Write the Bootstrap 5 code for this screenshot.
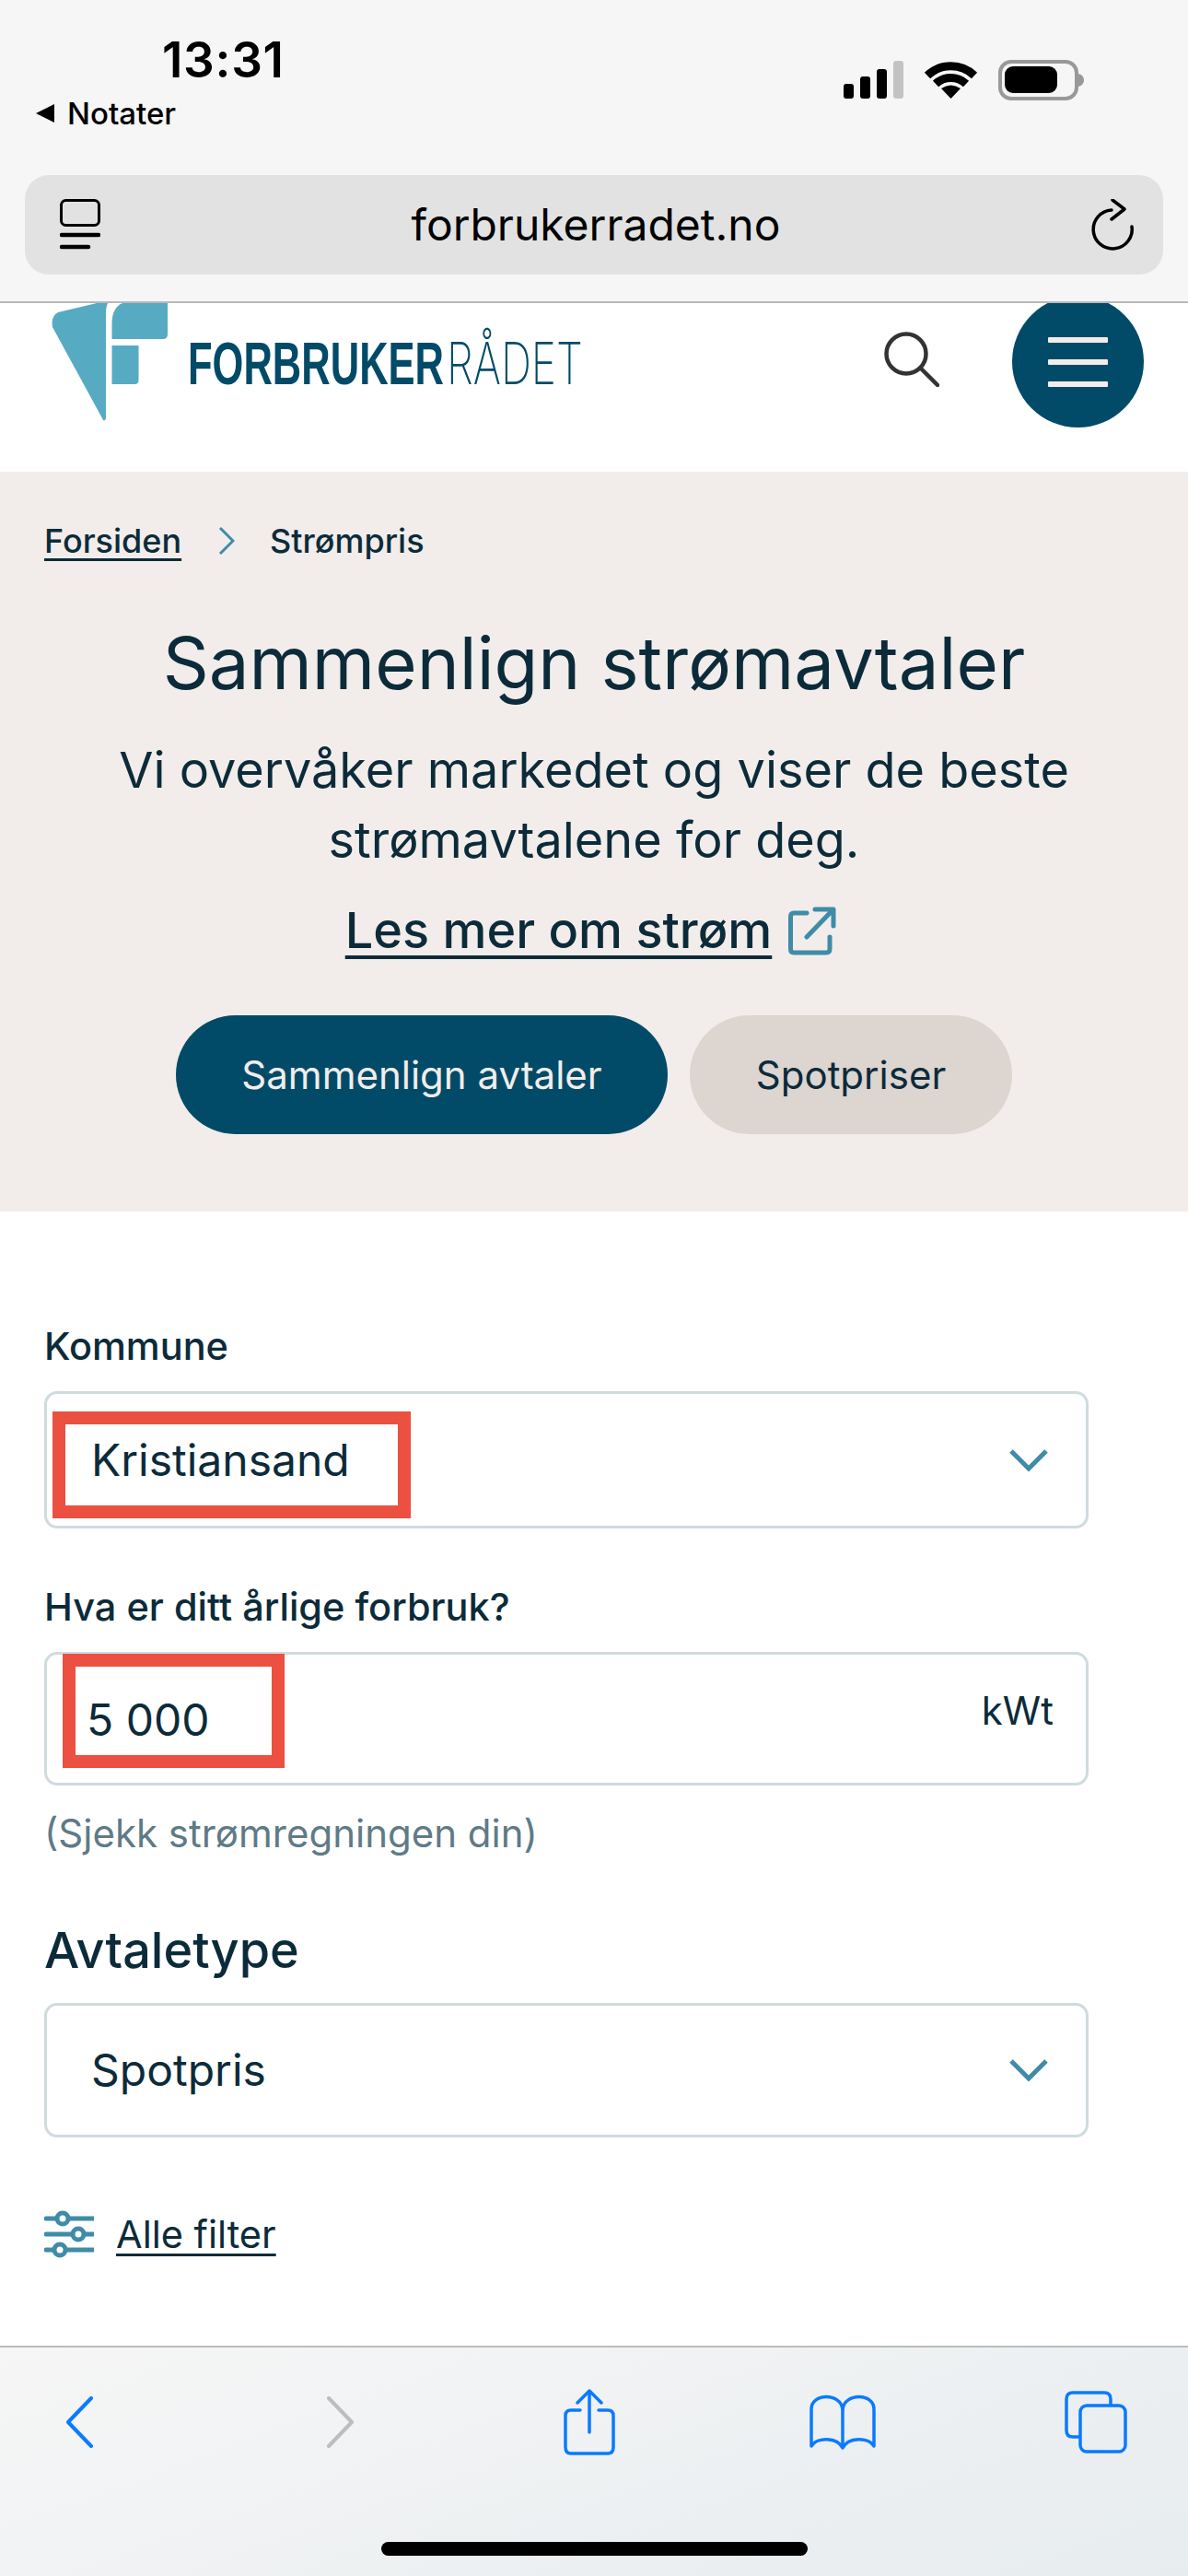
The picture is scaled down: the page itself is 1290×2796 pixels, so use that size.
<!DOCTYPE html>
<html lang="no">
<head>
  <meta charset="UTF-8">
  <meta name="viewport" content="width=device-width, initial-scale=1.0">
  <title>Sammenlign strømavtaler</title>
  <link href="https://cdn.jsdelivr.net/npm/bootstrap@5.3.0/dist/css/bootstrap.min.css" rel="stylesheet">
  <style>
    body { font-family: Inter, "Liberation Sans", sans-serif; color: #0c2b3a; background: #fff; }
    a { color: inherit; }
    .page-wrap { min-height: 2796px; }

    /* browser chrome */
    .chrome-top { height: 329px; padding: 38px 27px 0; background: #f6f6f6; border-bottom: 2px solid #b8b8b8; color: #000; }
    .status-row { height: 54px; }
    .clock { margin-left: 149px; font-size: 53px; line-height: 54px; font-weight: 600; letter-spacing: .7px; }
    .status-icons { margin: 27px 83px 0 0; }
    .back-app { margin-top: 13px; margin-left: 11px; font-size: 33px; line-height: 36px; font-weight: 500; gap: 13px; }
    .url-bar { height: 108px; margin-top: 49px; padding: 0 32px 0 38px; background: #e2e2e2; border-radius: 26px; font-size: 48px; }

    /* site header */
    .site-head { height: 183px; padding: 0 48px 0 56px; overflow: hidden; }
    .brand-name { margin: 42px 0 0 22px; height: 46px; font-size: 64px; line-height: 46px; color: #024b68; white-space: nowrap; }
    .brand-strong, .brand-thin { display: inline-block; transform-origin: left center; }
    .brand-strong { width: 417px; margin-right: -142px; font-family: "Liberation Sans", sans-serif; font-weight: 700; transform: scaleX(.68); }
    .brand-thin { width: 186px; margin-left: 6px; font-family: Inter, sans-serif; font-weight: 200; font-size: 63px; transform: scaleX(.73); }
    .search-btn { margin: 31px 79px 0 0; }
    .menu-btn { width: 143px; height: 143px; margin-top: -8px; background: #024b68; border-radius: 50%; gap: 18px; }
    .menu-btn span { display: block; width: 65px; height: 6px; background: #f2edea; border-radius: 1px; }

    /* hero */
    .hero-box { background: #f2edea; padding: 53px 48px 84px; height: 803px; }
    .crumbs { font-size: 36px; line-height: 44px; font-weight: 500; }
    .crumbs a { width: 148px; text-decoration-thickness: 3px; text-underline-offset: 6px; }
    .crumbs svg { margin: 0 38px 0 41px; }
    .hero-title { margin: 61px 0 0; font-size: 78px; line-height: 100px; font-weight: 400; }
    .hero-text { margin: 28px 0 0; font-size: 54px; line-height: 76px; }
    .hero-link { margin: 28px 7px 0 0; font-size: 54px; line-height: 64px; font-weight: 500; gap: 18px; }
    .hero-link a { text-decoration-thickness: 4px; text-underline-offset: 8px; }
    .hero-btns { margin-top: 60px; gap: 24px; }
    .btn-pill { height: 129px; border: 0; border-radius: 65px; font-size: 42px; line-height: 1; }
    .btn-main { width: 534px; background: #024b68; color: #f2edea; }
    .btn-soft { width: 350px; background: #dcd5d0; color: #0c2b3a; }

    /* form */
    .filter-form { padding: 123px 108px 0 48px; }
    .field-label { display: block; margin: 0 0 26px; font-size: 41.500px; line-height: 46px; font-weight: 500; }
    .field-next { margin-top: 62px; }
    .box-field { position: relative; }
    .form-select.pick-box, .input-box { height: 149px; border: 3px solid #d0dbdf; border-radius: 14px; background-color: #fff; color: #0c2b3a; font-size: 48px; }
    .form-select.pick-box { padding: 0 0 0 48px; background-position: right 40px center; background-size: 44px 26px; box-shadow: none;
      background-image: url("data:image/svg+xml,%3Csvg xmlns='http://www.w3.org/2000/svg' viewBox='0 0 44 26'%3E%3Cpath d='M3 3l19 19L41 3' fill='none' stroke='%233f8ba8' stroke-width='5'/%3E%3C/svg%3E"); }
    .input-box { height: 145px; padding: 0 35px 0 43px; }
    .input-box input { flex: 1; width: 100%; margin-top: 2px; padding: 0; border: 0; outline: 0; background: none; color: inherit; font: inherit; }
    .unit-text { margin-top: -18px; font-size: 42px; }
    .note-mark { position: absolute; border-style: solid; border-color: #eb5040; border-width: 14px; pointer-events: none; }
    .mark-city { left: 9px; top: 22px; width: 389px; height: 116px; }
    .mark-use { left: 20px; top: 2px; width: 241px; height: 124px; }
    .hint-text { margin: 29px 0 0; font-size: 42px; line-height: 46px; color: #5f7a87; }
    .type-title { margin: 72px 0 25px; font-size: 54px; line-height: 64px; font-weight: 500; }
    .pick-short { height: 146px !important; }
    .filter-link { margin-top: 79px; font-size: 41.500px; line-height: 50px; gap: 24px; }
    .filter-link a { text-decoration-thickness: 3px; text-underline-offset: 6px; }

    /* bottom toolbar */
    .chrome-bottom { height: 250px; padding-top: 45px; background: linear-gradient(160deg, #f6f6f6, #e7ecef); border-top: 2px solid #bcbcbc; }
    .tool-row { height: 71px; padding-left: 72px; }
    .tool-forward { margin-left: 252px; }
    .tool-share { margin-left: 228px; }
    .tool-book { margin-left: 211px; }
    .tool-tabs { margin-left: 205px; }
    .home-bar { width: 463px; height: 15px; margin: 95px auto 0; background: #000; border-radius: 8px; }
  </style>
</head>
<body>
  <div class="page-wrap d-flex flex-column">
    <header class="chrome-top">
      <div class="status-row d-flex justify-content-between align-items-start">
        <div class="clock">13:31</div>
        <svg class="status-icons" width="264" height="44" viewBox="0 0 264 44">
          <rect x="0" y="26" width="11" height="16" rx="3"/>
          <rect x="18" y="18" width="11" height="24" rx="3"/>
          <rect x="36" y="10" width="11" height="32" rx="3"/>
          <rect x="54" y="1" width="11" height="41" rx="3" fill="#c3c3c3"/>
          <path d="M91 17A37 37 0 0 1 142 17" fill="none" stroke="#000" stroke-width="9"/>
          <path d="M100 26A24 24 0 0 1 133 26" fill="none" stroke="#000" stroke-width="9"/>
          <path d="M116.500 42L106 31Q116.500 24 127 31Z"/>
          <rect x="170" y="2" width="83" height="40" rx="12" fill="none" stroke="#999" stroke-width="4"/>
          <rect x="175" y="7" width="57" height="29" rx="9"/>
          <path d="M255 15c4 1 6 4 6 7s-2 6-6 7z" fill="#999"/>
        </svg>
      </div>
      <div class="back-app d-flex align-items-center">
        <svg width="22" height="20" viewBox="0 0 22 20"><path d="M21 0v20L1 10z"/></svg>
        <span>Notater</span>
      </div>
      <div class="url-bar d-flex align-items-center justify-content-between">
        <svg width="44" height="56" viewBox="0 0 44 56" fill="none" stroke="#000">
          <rect x="1.500" y="1.500" width="41" height="27" rx="5" stroke-width="3"/>
          <path d="M2 39h40M2 52h29" stroke-width="4.500" stroke-linecap="round"/>
        </svg>
        <span>forbrukerradet.no</span>
        <svg width="46" height="56" viewBox="0 0 46 56" fill="none" stroke="#000" stroke-width="3.500" stroke-linecap="round" stroke-linejoin="round">
          <path d="M22 12A21 21 0 1 0 44 30"/>
          <path d="M23 1l13 10-14 11"/>
        </svg>
      </div>
    </header>

    <div class="site-head d-flex align-items-start">
      <svg width="126" height="128" viewBox="0 0 126 128" fill="#56abc2" class="flex-shrink-0">
        <path d="M49 0H61C59 4 59 9 59 16V125Q57 130 55 125L1 26Q-1 14 7 10Z"/>
        <path d="M65.500 22C65.500 10 70 3 77 0H126V34Q126 39 121 39H65.500Z"/>
        <path d="M65.500 46H94.500V84Q94.500 88 90 88H65.500Z"/>
      </svg>
      <div class="brand-name flex-grow-1"><span class="brand-strong">FORBRUKER</span><span class="brand-thin">RÅDET</span></div>
      <svg class="search-btn flex-shrink-0" width="60" height="60" viewBox="0 0 60 60" fill="none" stroke="#333" stroke-width="4.500" stroke-linecap="round">
        <circle cx="24" cy="24" r="21.500"/>
        <path d="M40 40l18 18"/>
      </svg>
      <button class="menu-btn d-flex flex-column align-items-center justify-content-center border-0 p-0 flex-shrink-0" type="button" aria-label="Meny">
        <span></span><span></span><span></span>
      </button>
    </div>

    <section class="hero-box">
      <nav class="crumbs d-flex align-items-center" aria-label="breadcrumb">
        <a href="#">Forsiden</a>
        <svg width="18" height="32" viewBox="0 0 18 32" fill="none" stroke="#3f8ba8" stroke-width="3"><path d="M2 2l14 14L2 30"/></svg>
        <span>Strømpris</span>
      </nav>
      <h1 class="hero-title text-center">Sammenlign strømavtaler</h1>
      <p class="hero-text text-center">Vi overvåker markedet og viser de beste<br>strømavtalene for deg.</p>
      <div class="hero-link d-flex justify-content-center align-items-center">
        <a href="#">Les mer om strøm</a>
        <svg width="52" height="53" viewBox="0 0 52 53" fill="none" stroke="#3f8ba8" stroke-width="5" stroke-linecap="round" stroke-linejoin="round">
          <path d="M20 7H6Q2.500 7 2.500 11V46Q2.500 50 6 50H41Q45 50 45 46V33"/>
          <path d="M20 33L48 4M29 3h20v18"/>
        </svg>
      </div>
      <div class="hero-btns d-flex justify-content-center">
        <button class="btn btn-pill btn-main" type="button">Sammenlign avtaler</button>
        <button class="btn btn-pill btn-soft" type="button">Spotpriser</button>
      </div>
    </section>

    <main class="filter-form flex-grow-1">
      <label class="field-label" for="kommune">Kommune</label>
      <div class="box-field">
        <select class="form-select pick-box" id="kommune"><option>Kristiansand</option></select>
        <div class="note-mark mark-city"></div>
      </div>

      <label class="field-label field-next" for="forbruk">Hva er ditt årlige forbruk?</label>
      <div class="box-field">
        <div class="input-box d-flex align-items-center">
          <input id="forbruk" type="text" value="5 000">
          <span class="unit-text">kWt</span>
        </div>
        <div class="note-mark mark-use"></div>
      </div>
      <div class="hint-text">(Sjekk strømregningen din)</div>

      <h2 class="type-title">Avtaletype</h2>
      <select class="form-select pick-box pick-short" aria-label="Avtaletype"><option>Spotpris</option></select>

      <div class="filter-link d-flex align-items-center">
        <svg width="54" height="52" viewBox="0 0 54 52" fill="none" stroke="#3f8ba8" stroke-linecap="round">
          <path d="M2 9h52M2 26h52M2 43h52" stroke-width="5"/>
          <g fill="#fff" stroke-width="5"><circle cx="20" cy="9" r="6"/><circle cx="37" cy="26" r="6"/><circle cx="17" cy="43" r="6"/></g>
        </svg>
        <a href="#">Alle filter</a>
      </div>
    </main>

    <footer class="chrome-bottom">
      <div class="tool-row d-flex align-items-center">
        <svg width="30" height="56" viewBox="0 0 30 56" fill="none" stroke="#0a7aff" stroke-width="4" stroke-linecap="round" stroke-linejoin="round"><path d="M27 2L2 28l25 26"/></svg>
        <svg class="tool-forward" width="30" height="56" viewBox="0 0 30 56" fill="none" stroke="#bdbdbd" stroke-width="4" stroke-linecap="round" stroke-linejoin="round"><path d="M3 2l25 26L3 54"/></svg>
        <svg class="tool-share" width="56" height="72" viewBox="0 0 56 72" fill="none" stroke="#0a7aff" stroke-width="3.500" stroke-linecap="round" stroke-linejoin="round">
          <path d="M18 23H8Q2 23 2 29V63Q2 70 8 70H48Q54 70 54 63V29Q54 23 48 23H38"/>
          <path d="M28 47V2M15 15L28 2l13 13"/>
        </svg>
        <svg class="tool-book" width="72" height="60" viewBox="0 0 72 60" fill="none" stroke="#0a7aff" stroke-width="3.500" stroke-linecap="round" stroke-linejoin="round">
          <path d="M36 16C34 -2 2 -2 2 16V56C8 46 30 46 36 58C42 46 64 46 70 56V16C70 -2 38 -2 36 16Z"/>
          <path d="M36 16V56"/>
        </svg>
        <svg class="tool-tabs" width="68" height="68" viewBox="0 0 68 68" fill="none" stroke="#0a7aff" stroke-width="3.500" stroke-linejoin="round">
          <path d="M17 50H9Q2 50 2 43V9Q2 2 9 2H43Q50 2 50 9V16"/>
          <rect x="17" y="16" width="49" height="50" rx="7"/>
        </svg>
      </div>
      <div class="home-bar"></div>
    </footer>
  </div>
  <script src="https://cdn.jsdelivr.net/npm/bootstrap@5.3.0/dist/js/bootstrap.bundle.min.js"></script>
</body>
</html>
